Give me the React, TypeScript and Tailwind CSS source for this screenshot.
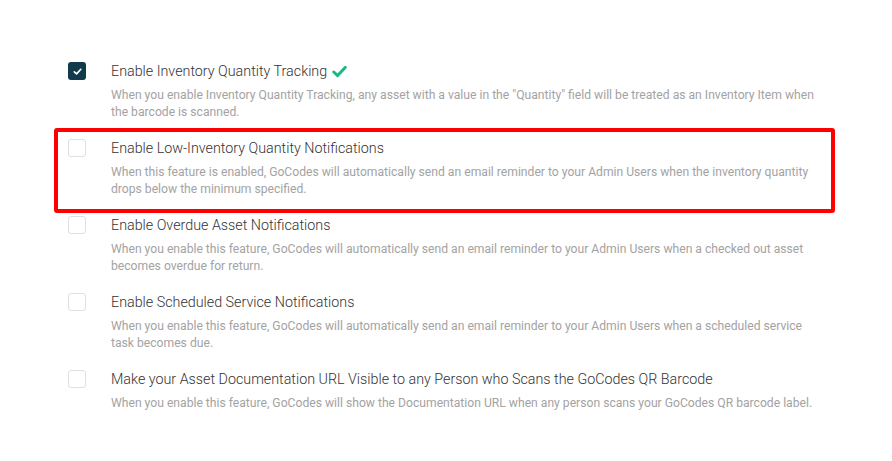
import React from "react";

const rows = [
  {
    title: "Enable Inventory Quantity Tracking",
    desc: 'When you enable Inventory Quantity Tracking, any asset with a value in the "Quantity" field will be treated as an Inventory Item when the barcode is scanned.',
    checked: true,
  },
  {
    title: "Enable Low-Inventory Quantity Notifications",
    desc: "When this feature is enabled, GoCodes will automatically send an email reminder to your Admin Users when the inventory quantity drops below the minimum specified.",
    highlight: true,
  },
  {
    title: "Enable Overdue Asset Notifications",
    desc: "When you enable this feature, GoCodes will automatically send an email reminder to your Admin Users when a checked out asset becomes overdue for return.",
  },
  {
    title: "Enable Scheduled Service Notifications",
    desc: "When you enable this feature, GoCodes will automatically send an email reminder to your Admin Users when a scheduled service task becomes due.",
  },
  {
    title: "Make your Asset Documentation URL Visible to any Person who Scans the GoCodes QR Barcode",
    desc: "When you enable this feature, GoCodes will show the Documentation URL when any person scans your GoCodes QR barcode label.",
  },
];

export default function App() {
  return (
    <div
      className="w-[892px] h-[461px] bg-white pt-[61px] pl-[68px]"
      style={{ fontFamily: "Roboto, 'Liberation Sans', sans-serif" }}
    >
      <div className="flex flex-col gap-[17px]">
        {rows.map((r, i) => (
          <div key={i} className="relative flex items-start gap-[25px]">
            {r.highlight && (
              <div className="absolute left-[-14px] top-[-10px] w-[781px] h-[85px] border-4 border-[#ff0000] rounded-[3px] pointer-events-none" />
            )}
            {r.checked ? (
              <div className="mt-[1px] w-[18px] h-[18px] shrink-0 rounded-[3px] bg-[#113a4b] flex items-center justify-center">
                <svg width="11" height="11" viewBox="0 0 12 12" fill="none">
                  <path d="M2.5 6.3 L5 8.6 L9.6 3.6" stroke="white" strokeWidth="1.8" strokeLinecap="round" strokeLinejoin="round" />
                </svg>
              </div>
            ) : (
              <div className="mt-[1px] w-[18px] h-[18px] shrink-0 rounded-[3px] border border-[#e0e0e0] bg-white" />
            )}
            <div className="w-[712px]">
              <div className="flex items-center gap-[5px] text-[14.3px] leading-[20px] font-light text-[#333333]">
                <span>{r.title}</span>
                {r.checked && (
                  <svg width="15" height="13" viewBox="0 0 15 13" fill="none">
                    <path d="M1.8 7 L5.6 10.6 L13.2 2.4" stroke="#1cb87f" strokeWidth="3" strokeLinecap="round" strokeLinejoin="round" />
                  </svg>
                )}
              </div>
              <div className="mt-[6px] text-[12.15px] leading-[17px] text-[#a3a3a3]">{r.desc}</div>
            </div>
          </div>
        ))}
      </div>
    </div>
  );
}
